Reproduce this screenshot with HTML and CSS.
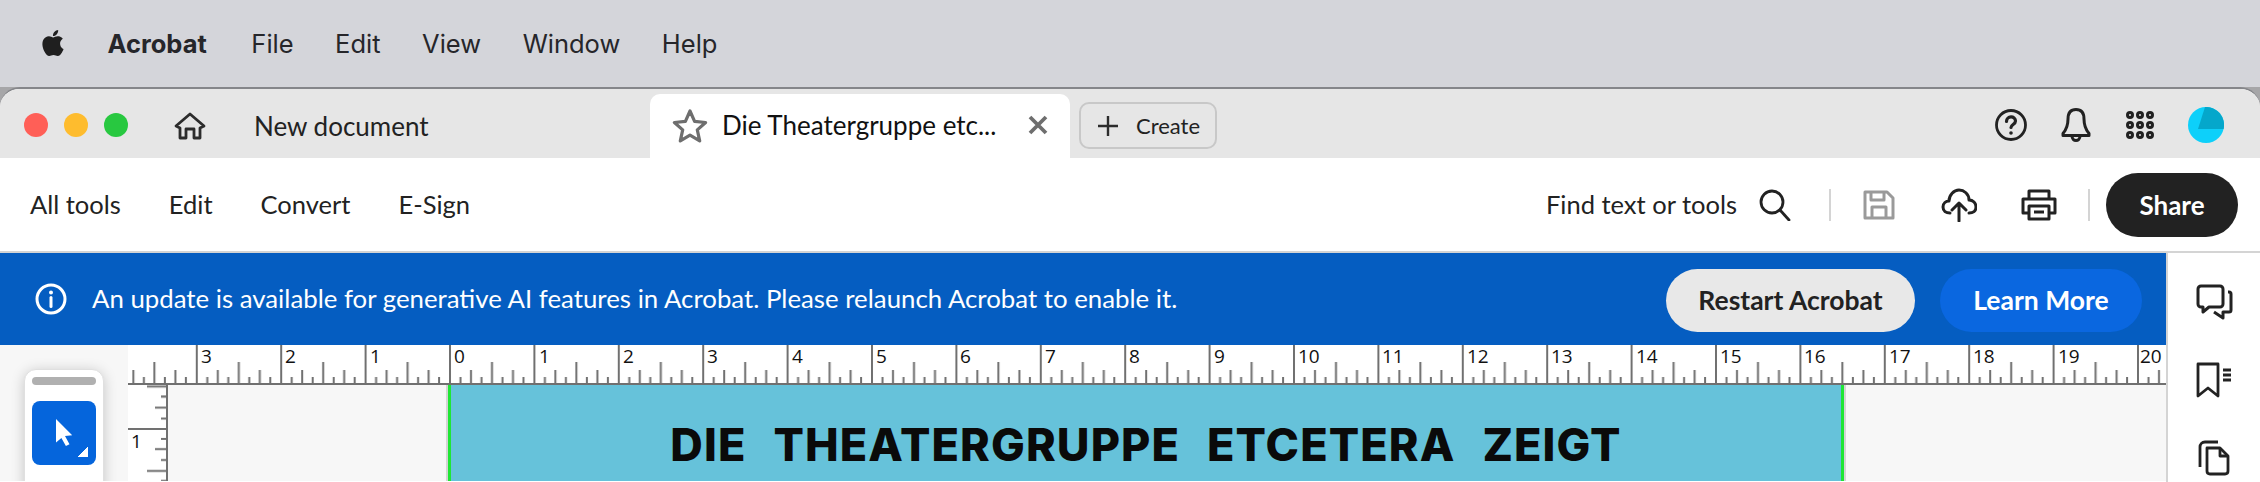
FILE: index.html

```html
<!DOCTYPE html>
<html lang="en">
<head>
  <meta charset="UTF-8">
  <title>Acrobat</title>
  <link rel="stylesheet" href="styles.css">
</head>
<body>
<div class="menubar">
  <svg class="apple" viewBox="0 0 24 24"><path d="M12.152 6.896c-.948 0-2.415-1.078-3.96-1.04-2.04.027-3.91 1.183-4.961 3.014-2.117 3.675-.546 9.103 1.519 12.09 1.013 1.454 2.208 3.09 3.792 3.039 1.52-.065 2.09-.987 3.935-.987 1.831 0 2.35.987 3.96.948 1.637-.026 2.676-1.48 3.676-2.948 1.156-1.688 1.636-3.325 1.662-3.415-.039-.013-3.182-1.221-3.22-4.857-.026-3.04 2.48-4.494 2.597-4.559-1.429-2.09-3.623-2.324-4.39-2.376-2-.156-3.675 1.09-4.61 1.09zM15.53 3.83c.843-1.012 1.4-2.427 1.245-3.83-1.207.052-2.662.805-3.532 1.818-.78.896-1.454 2.338-1.273 3.714 1.338.104 2.715-.688 3.559-1.701"/></svg>
  <span class="menu-app">Acrobat</span>
  <span>File</span>
  <span>Edit</span>
  <span>View</span>
  <span>Window</span>
  <span>Help</span>
</div>

<div class="window">
  <div class="titlebar">
    <div class="lights">
      <i class="light red"></i>
      <i class="light yellow"></i>
      <i class="light green"></i>
    </div>
    <svg class="home" viewBox="0 0 32 28" fill="none" stroke="#2c2c2c" stroke-width="2.8" stroke-linejoin="round" stroke-linecap="round"><path d="M2 14 16 2l14 12-4 2v10h-6v-9h-8v9H6V16z"/></svg>
    <span class="tab-plain">New document</span>
    <div class="tab-active">
      <svg class="star" viewBox="0 0 36 34" fill="none" stroke="#6e6e6e" stroke-width="3.2" stroke-linejoin="round"><path d="M18 2.5l4.6 10.4 11 1.1-8.3 7.4 2.4 11L18 26.6 8.300 32.4l2.4-11L2.4 14l11-1.1z"/></svg>
      <span class="tab-title">Die Theatergruppe etc...</span>
      <svg class="close" viewBox="0 0 20 20" stroke="#6e6e6e" stroke-width="3.8"><path d="M2 2l16 16M18 2 2 18"/></svg>
    </div>
    <div class="create">
      <svg class="plus" viewBox="0 0 20 20" stroke="#2c2c2c" stroke-width="2.4"><path d="M10 0v20M0 10h20"/></svg>
      <span>Create</span>
    </div>
    <div class="title-icons">
      <svg class="icon-help" viewBox="0 0 32 32" fill="none" stroke="#222" stroke-width="2.8"><circle cx="16" cy="16" r="14.5"/><path d="M11.5 12.5c0-6 9-6 9-.5 0 3.5-4.5 3.5-4.5 6.5" stroke-width="3.2" stroke-linecap="round"/><circle cx="16" cy="24" r="1.8" fill="#222" stroke="none"/></svg>
      <svg class="icon-bell" viewBox="0 0 30 34" fill="none" stroke="#222" stroke-width="3" stroke-linejoin="round"><path d="M15 1.5c-5.5 0-8 4-8 9.5 0 7-2 11-5 14.5v2h26v-2c-3-3.5-5-7.5-5-14.5 0-5.5-2.5-9.5-8-9.5z"/><path d="M11 28c0 6 8 6 8 0"/></svg>
      <div class="icon-grid">
        <i></i><i></i><i></i><i></i><i></i><i></i><i></i><i></i><i></i>
      </div>
      <svg class="avatar" viewBox="0 0 36 36"><circle cx="18" cy="18" r="18" fill="#0dd0fa"/><path d="M17 0A18 18 0 0 1 35.6 22H10z" fill="#05a7cb"/></svg>
    </div>
  </div>

  <div class="toolbar">
    <nav class="tool-nav">
      <span>All tools</span>
      <span>Edit</span>
      <span>Convert</span>
      <span>E-Sign</span>
    </nav>
    <div class="tool-actions">
      <span class="find">Find text or tools</span>
      <svg class="icon-search" viewBox="0 0 32 32" fill="none" stroke="#222" stroke-width="2.8" stroke-linecap="round"><circle cx="13" cy="13" r="11"/><path d="M21 21l9 10"/></svg>
      <i class="divider first"></i>
      <svg class="icon-save" viewBox="0 0 32 30" fill="none" stroke="#9a9a9a" stroke-width="3" stroke-linejoin="round"><path d="M2 2h22l6 6v20H2z"/><path d="M8 2v8h13V2M9 28V17h14v11"/></svg>
      <svg class="icon-cloud" viewBox="0 0 36 34" fill="none" stroke="#222" stroke-width="3" stroke-linecap="round" stroke-linejoin="round"><path d="M9 25c-4 0-7-2-7-6s3-6 6-6c0-6 5-11 10-11s10 4 10 10c4 0 7 3 7 7s-3 6-7 6"/><path d="M18 33V15M11 22l7-7 7 7"/></svg>
      <svg class="icon-print" viewBox="0 0 36 32" fill="none" stroke="#222" stroke-width="3" stroke-linejoin="round"><path d="M8 10V2h20v8"/><path d="M8 24H2V10h32v14h-6"/><path d="M8 17h20v13H8z"/><path d="M13 23h10"/></svg>
      <i class="divider"></i>
      <div class="share">Share</div>
    </div>
  </div>

  <div class="workspace">
    <div class="main">
      <div class="banner">
        <svg class="icon-info" viewBox="0 0 32 32" fill="none" stroke="#fff" stroke-width="3"><circle cx="16" cy="16" r="14"/><path d="M16 14.5v9" stroke-linecap="round"/><circle cx="16" cy="9.5" r="2" fill="#fff" stroke="none"/></svg>
        <span class="banner-text">An update is available for generative AI features in Acrobat. Please relaunch Acrobat to enable it.</span>
        <div class="btn-restart">Restart Acrobat</div>
        <div class="btn-learn">Learn More</div>
      </div>
      <div class="viewer">
        <div class="rail">
          <div class="tool-panel">
            <div class="handle"></div>
            <div class="tool-select">
              <svg class="cursor" viewBox="0 0 20 30" fill="#fff"><path d="M0 0l18 18-8 1 5 9-4 2-5-9-6 5z"/></svg>
              <i class="corner"></i>
            </div>
          </div>
        </div>
        <div class="rulers">
          <svg class="ruler-top" width="2038" height="40">
            <defs>
              <pattern id="ticksH" patternUnits="userSpaceOnUse" x="67.8" y="0" width="84.4" height="40">
                <path stroke="#707070" stroke-width="2" d="M1 0v40M11.5 32v8M22 25v15M32.5 32v8M43 17v23M53.5 32v8M64 25v15M74.5 32v8"/>
              </pattern>
            </defs>
            <rect width="2038" height="40" fill="#fff"/>
            <rect width="2038" height="40" fill="url(#ticksH)"/>
            <rect y="38" width="2038" height="2" fill="#707070"/>
            <g class="ruler-num">
              <text x="73" y="18">3</text><text x="157" y="18">2</text><text x="242" y="18">1</text>
              <text x="326" y="18">0</text><text x="411" y="18">1</text><text x="495" y="18">2</text>
              <text x="579" y="18">3</text><text x="664" y="18">4</text><text x="748" y="18">5</text>
              <text x="832" y="18">6</text><text x="917" y="18">7</text><text x="1001" y="18">8</text>
              <text x="1086" y="18">9</text><text x="1170" y="18">10</text><text x="1254" y="18">11</text>
              <text x="1339" y="18">12</text><text x="1423" y="18">13</text><text x="1508" y="18">14</text>
              <text x="1592" y="18">15</text><text x="1676" y="18">16</text><text x="1761" y="18">17</text>
              <text x="1845" y="18">18</text><text x="1930" y="18">19</text><text x="2012" y="18">20</text>
            </g>
          </svg>
          <div class="doc-row">
            <svg class="ruler-left" width="40" height="96">
              <defs>
                <pattern id="ticksV" patternUnits="userSpaceOnUse" x="0" y="-41.4" width="40" height="84.4">
                  <path stroke="#707070" stroke-width="2" d="M0 1h40M33 11h7M27 21h13M33 32h7M19 43h21M33 53h7M27 64h13M33 75h7"/>
                </pattern>
              </defs>
              <rect width="40" height="96" fill="#fff"/>
              <rect width="40" height="96" fill="url(#ticksV)"/>
              <rect x="38" width="2" height="96" fill="#707070"/>
              <text class="ruler-num" x="3" y="63">1</text>
            </svg>
            <div class="canvas">
              <div class="page">
                <h1>DIE THEATERGRUPPE ETCETERA ZEIGT</h1>
              </div>
            </div>
          </div>
        </div>
      </div>
    </div>
    <aside class="side">
      <svg class="icon-comment" viewBox="0 0 38 36" fill="none" stroke="#222" stroke-width="3" stroke-linejoin="round"><path d="M5 2h19a3 3 0 0 1 3 3v15a3 3 0 0 1-3 3H13l-6 5v-5H5a3 3 0 0 1-3-3V5a3 3 0 0 1 3-3z"/><path d="M32 8h1a2 2 0 0 1 2 2v16a2 2 0 0 1-2 2h-6v6l-9-6"/></svg>
      <svg class="icon-bookmark" viewBox="0 0 36 36" fill="none" stroke="#222" stroke-width="2.8" stroke-linejoin="round"><path d="M2 2h20v32L12 26 2 34z"/><path d="M27 8h8M27 13h8M27 18h8"/></svg>
      <svg class="icon-pages" viewBox="0 0 32 36" fill="none" stroke="#222" stroke-width="2.8" stroke-linejoin="round"><path d="M20 2H7C4 2 2 4 2 7v20"/><path d="M9 8h13l8 8v15c0 2-1 3-3 3H12c-2 0-3-1-3-3z"/><path d="M22 8v8h8"/></svg>
    </aside>
  </div>
</div>
</body>
</html>
```

FILE: styles.css

```css
* {
  box-sizing: border-box;
}
html, body {
  margin: 0;
  height: 482px;
  overflow: hidden;
}
body {
  background: #a6a6a8;
  font-family: Lato, "Open Sans", sans-serif;
  color: #222;
}
svg {
  display: block;
  flex: none;
}

/* mac menu bar */
.menubar {
  height: 87px;
  background: #d4d5da;
  display: flex;
  align-items: center;
  font-family: Inter, sans-serif;
  font-size: 25.5px;
  color: #26262a;
  padding-left: 40px;
  gap: 41.5px;
}
.apple {
  width: 26px;
  height: 30px;
  margin-right: 0;
  fill: #1f1f1f;
  margin-top: -2px;
}
.menu-app {
  font-weight: 700;
  margin-right: 3px;
}

/* window */
.window {
  height: 395px;
  border-top: 2px solid #85868a;
  border-radius: 20px 20px 0 0;
  overflow: hidden;
  background: #fff;
}
.titlebar {
  height: 69px;
  background: #e6e6e6;
  display: flex;
  align-items: flex-end;
  position: relative;
}
.lights {
  display: flex;
  gap: 16px;
  padding-left: 24px;
  align-self: center;
  margin-top: 2px;
}
.light {
  width: 24px;
  height: 24px;
  border-radius: 50%;
}
.red { background: #ff5f57; }
.yellow { background: #febc2e; }
.green { background: #28c840; }
.home {
  width: 32px;
  height: 28px;
  margin-left: 46px;
  align-self: center;
  margin-top: 5px;
}
.tab-plain {
  align-self: center;
  margin-left: 48px;
  width: 396px;
  font-size: 26px;
  margin-top: 5px;
}
.tab-active {
  width: 420px;
  height: 64px;
  background: #fff;
  border-radius: 10px 10px 0 0;
  display: flex;
  align-items: center;
  padding-left: 22px;
  padding-bottom: 2px;
}
.star {
  width: 36px;
  height: 35px;
}
.tab-title {
  margin-left: 14px;
  width: 306px;
  font-size: 26px;
  color: #111;
  white-space: nowrap;
}
.close {
  width: 20px;
  height: 20px;
}
.create {
  width: 138px;
  height: 47px;
  margin-left: 9px;
  margin-bottom: 9px;
  border: 2px solid #c8c8c8;
  border-radius: 10px;
  display: flex;
  align-items: center;
  padding-left: 17px;
  gap: 18px;
  font-size: 22px;
}
.plus {
  width: 20px;
  height: 20px;
}
.title-icons {
  margin-left: auto;
  align-self: center;
  display: flex;
  align-items: center;
  padding-right: 36px;
  gap: 34px;
  margin-top: 3px;
}
.icon-help {
  width: 32px;
  height: 32px;
}
.icon-bell {
  width: 30px;
  height: 34px;
}
.icon-grid {
  width: 28px;
  height: 28px;
  display: grid;
  grid-template-columns: repeat(3, 8px);
  grid-auto-rows: 8px;
  gap: 2px;
  margin-left: 1px;
}
.icon-grid i {
  border: 3px solid #222;
  border-radius: 4px;
}
.avatar {
  width: 36px;
  height: 36px;
}

/* toolbar */
.toolbar {
  height: 95px;
  display: flex;
  align-items: center;
  justify-content: space-between;
  border-bottom: 2px solid #d4d4d4;
  font-size: 25.5px;
}
.tool-nav {
  display: flex;
  gap: 48px;
  padding-left: 30px;
  margin-top: -2px;
}
.tool-actions {
  display: flex;
  align-items: center;
  padding-right: 22px;
}
.find {
  margin-right: 22px;
  margin-top: -2px;
}
.icon-search {
  width: 32px;
  height: 32px;
}
.divider {
  width: 2px;
  height: 32px;
  background: #d4d4d4;
  margin-left: 16px;
  margin-right: 16px;
}
.divider.first {
  margin-left: 38px;
  margin-right: 32px;
}
.icon-save {
  width: 32px;
  height: 30px;
  margin-right: 46px;
}
.icon-cloud {
  width: 36px;
  height: 34px;
  margin-right: 44px;
}
.icon-print {
  width: 36px;
  height: 32px;
  margin-right: 15px;
}
.share {
  width: 132px;
  height: 64px;
  border-radius: 32px;
  background: #222;
  color: #fff;
  font-size: 26px;
  font-weight: 700;
  display: flex;
  align-items: center;
  justify-content: center;
}

/* body of the window */
.workspace {
  display: flex;
  height: 229px;
}
.main {
  width: 2166px;
}
.banner {
  height: 92px;
  background: #055dc1;
  color: #fff;
  display: flex;
  align-items: center;
  padding-left: 35px;
  font-size: 25.8px;
}
.icon-info {
  width: 32px;
  height: 32px;
}
.banner-text {
  margin-left: 25px;
  width: 1574px;
  white-space: nowrap;
  margin-top: -2px;
}
.btn-restart,
.btn-learn {
  height: 63px;
  margin-top: 2px;
  border-radius: 32px;
  display: flex;
  align-items: center;
  justify-content: center;
  font-size: 26.5px;
  font-weight: 700;
}
.btn-restart {
  width: 249px;
  background: #e8e8e8;
  color: #222;
}
.btn-learn {
  width: 202px;
  margin-left: 25px;
  background: #0a67e0;
}

.viewer {
  display: flex;
  height: 137px;
}
.rail {
  width: 128px;
  height: 136px;
  background: #f7f7f7;
  padding: 24px 24px 0;
  overflow: hidden;
}
.tool-panel {
  width: 80px;
  height: 160px;
  background: #fff;
  border: 1px solid #e0e0e0;
  border-radius: 12px;
  box-shadow: 0 2px 14px rgba(0,0,0,0.2);
  padding: 7px;
}
.handle {
  height: 8px;
  background: #b0b0b0;
  border-radius: 4px;
}
.tool-select {
  width: 64px;
  height: 64px;
  margin-top: 16px;
  background: #0565dc;
  border-radius: 8px;
  position: relative;
  padding: 17px 0 0 24px;
}
.cursor {
  width: 18px;
  height: 29px;
}
.corner {
  position: absolute;
  right: 8px;
  bottom: 8px;
  width: 10px;
  height: 10px;
  background: linear-gradient(135deg, transparent 50%, #fff 50%);
}
.rulers {
  width: 2038px;
}
.ruler-top {
  overflow: visible;
}
.ruler-num {
  font-family: "Open Sans", sans-serif;
  font-size: 19px;
  fill: #111;
}
.doc-row {
  display: flex;
}
.canvas {
  width: 1998px;
  height: 96px;
  background: #f7f7f7;
  padding-left: 280px;
  overflow: hidden;
}
.page {
  width: 1396px;
  height: 96px;
  padding-top: 36px;
  background: #66c2da;
  border-left: 3px solid #1fe635;
  border-right: 3px solid #1fe635;
  box-shadow: 0 0 0 2px #d4d4d4;
}
h1 {
  margin: 0;
  text-align: center;
  font-family: Inter, sans-serif;
  font-weight: 800;
  font-size: 45px;
  line-height: 48px;
  letter-spacing: 1.1px;
  word-spacing: 16px;
  color: #0a0a0a;
}

.side {
  width: 94px;
  background: #fff;
  border-left: 2px solid #d4d4d4;
  padding: 31px 0 0 28px;
}
.icon-comment {
  width: 38px;
  height: 36px;
}
.icon-bookmark {
  width: 36px;
  height: 36px;
  margin-top: 42px;
}
.icon-pages {
  width: 32px;
  height: 36px;
  margin-top: 42px;
  margin-left: 2px;
}
```
